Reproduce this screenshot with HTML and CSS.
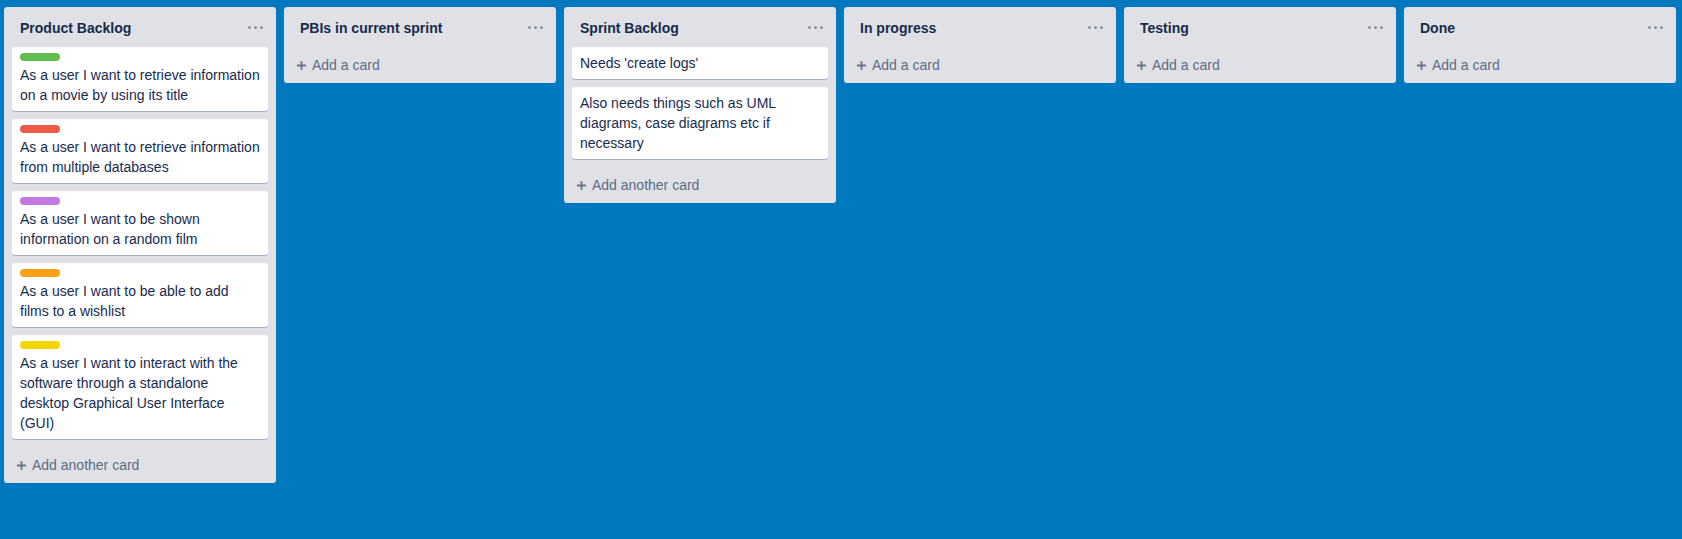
FILE: index.html
```html
<!DOCTYPE html>
<html lang="en">
<head>
<meta charset="utf-8">
<title>Board</title>
<link rel="stylesheet" href="styles.css">
</head>
<body>
<div class="board">
  <div class="list">
    <div class="list-header"><span class="list-title">Product Backlog</span><svg class="dots" width="15" height="3" viewBox="0 0 15 3"><circle cx="1.5" cy="1.5" r="1.5"/><circle cx="7.5" cy="1.5" r="1.5"/><circle cx="13.5" cy="1.5" r="1.5"/></svg></div>
    <div class="cards">
      <div class="card"><span class="label green"></span><div class="card-text">As a user I want to retrieve information on a movie by using its title</div></div>
      <div class="card"><span class="label red"></span><div class="card-text">As a user I want to retrieve information from multiple databases</div></div>
      <div class="card"><span class="label purple"></span><div class="card-text">As a user I want to be shown information on a random film</div></div>
      <div class="card"><span class="label orange"></span><div class="card-text">As a user I want to be able to add films to a wishlist</div></div>
      <div class="card"><span class="label yellow"></span><div class="card-text">As a user I want to interact with the software through a standalone desktop Graphical User Interface (GUI)</div></div>
    </div>
    <div class="composer"><svg class="plus" width="9" height="9" viewBox="0 0 9 9"><path d="M4.5 0V9M0 4.5H9"/></svg>Add another card</div>
  </div>
  <div class="list">
    <div class="list-header"><span class="list-title">PBIs in current sprint</span><svg class="dots" width="15" height="3" viewBox="0 0 15 3"><circle cx="1.5" cy="1.5" r="1.5"/><circle cx="7.5" cy="1.5" r="1.5"/><circle cx="13.5" cy="1.5" r="1.5"/></svg></div>
    <div class="composer"><svg class="plus" width="9" height="9" viewBox="0 0 9 9"><path d="M4.5 0V9M0 4.5H9"/></svg>Add a card</div>
  </div>
  <div class="list">
    <div class="list-header"><span class="list-title">Sprint Backlog</span><svg class="dots" width="15" height="3" viewBox="0 0 15 3"><circle cx="1.5" cy="1.5" r="1.5"/><circle cx="7.5" cy="1.5" r="1.5"/><circle cx="13.5" cy="1.5" r="1.5"/></svg></div>
    <div class="cards">
      <div class="card"><div class="card-text">Needs 'create logs'</div></div>
      <div class="card"><div class="card-text">Also needs things such as UML diagrams, case diagrams etc if necessary</div></div>
    </div>
    <div class="composer"><svg class="plus" width="9" height="9" viewBox="0 0 9 9"><path d="M4.5 0V9M0 4.5H9"/></svg>Add another card</div>
  </div>
  <div class="list">
    <div class="list-header"><span class="list-title">In progress</span><svg class="dots" width="15" height="3" viewBox="0 0 15 3"><circle cx="1.5" cy="1.5" r="1.5"/><circle cx="7.5" cy="1.5" r="1.5"/><circle cx="13.5" cy="1.5" r="1.5"/></svg></div>
    <div class="composer"><svg class="plus" width="9" height="9" viewBox="0 0 9 9"><path d="M4.5 0V9M0 4.5H9"/></svg>Add a card</div>
  </div>
  <div class="list">
    <div class="list-header"><span class="list-title">Testing</span><svg class="dots" width="15" height="3" viewBox="0 0 15 3"><circle cx="1.5" cy="1.5" r="1.5"/><circle cx="7.5" cy="1.5" r="1.5"/><circle cx="13.5" cy="1.5" r="1.5"/></svg></div>
    <div class="composer"><svg class="plus" width="9" height="9" viewBox="0 0 9 9"><path d="M4.5 0V9M0 4.5H9"/></svg>Add a card</div>
  </div>
  <div class="list">
    <div class="list-header"><span class="list-title">Done</span><svg class="dots" width="15" height="3" viewBox="0 0 15 3"><circle cx="1.5" cy="1.5" r="1.5"/><circle cx="7.5" cy="1.5" r="1.5"/><circle cx="13.5" cy="1.5" r="1.5"/></svg></div>
    <div class="composer"><svg class="plus" width="9" height="9" viewBox="0 0 9 9"><path d="M4.5 0V9M0 4.5H9"/></svg>Add a card</div>
  </div>
</div>
</body>
</html>
```

FILE: styles.css
```css
html, body {
  margin: 0;
  padding: 0;
  background: #0079bf;
  height: 100%;
}

body {
  font-family: "Liberation Sans", Arial, Helvetica, sans-serif;
  font-size: 14px;
  line-height: 20px;
  color: #172b4d;
}

.board {
  display: flex;
  align-items: flex-start;
  gap: 8px;
  padding: 7px 4px;
}

.list {
  width: 272px;
  flex: 0 0 272px;
  background: #dfe1e6;
  border-radius: 3px;
  display: flex;
  flex-direction: column;
}

.list-header {
  display: flex;
  justify-content: space-between;
  align-items: flex-start;
  padding: 11px 13px 9px 16px;
}

.list-title {
  font-weight: 700;
  color: #172b4d;
  line-height: 20px;
}

.dots {
  margin-top: 8px;
  fill: #8b939f;
}

.cards {
  padding: 0 8px;
  display: flex;
  flex-direction: column;
}

.card {
  background: #fff;
  border-radius: 3px;
  box-shadow: 0 1px 0 rgba(9, 30, 66, 0.25);
  padding: 6px 8px 2px;
  margin-bottom: 8px;
}

.label {
  display: block;
  width: 40px;
  height: 8px;
  border-radius: 4px;
  margin-bottom: 4px;
}

.green { background: #61bd4f; }
.red { background: #eb5a46; }
.purple { background: #c377e0; }
.orange { background: #ff9f1a; }
.yellow { background: #f2d600; }

.card-text {
  margin-bottom: 4px;
  line-height: 20px;
}

.composer {
  display: flex;
  align-items: center;
  padding: 8px 8px 8px 13px;
  color: #5e6c84;
  line-height: 20px;
}

.plus {
  margin-right: 6px;
  stroke: #6b778c;
  stroke-width: 1.8;
  fill: none;
}
```
